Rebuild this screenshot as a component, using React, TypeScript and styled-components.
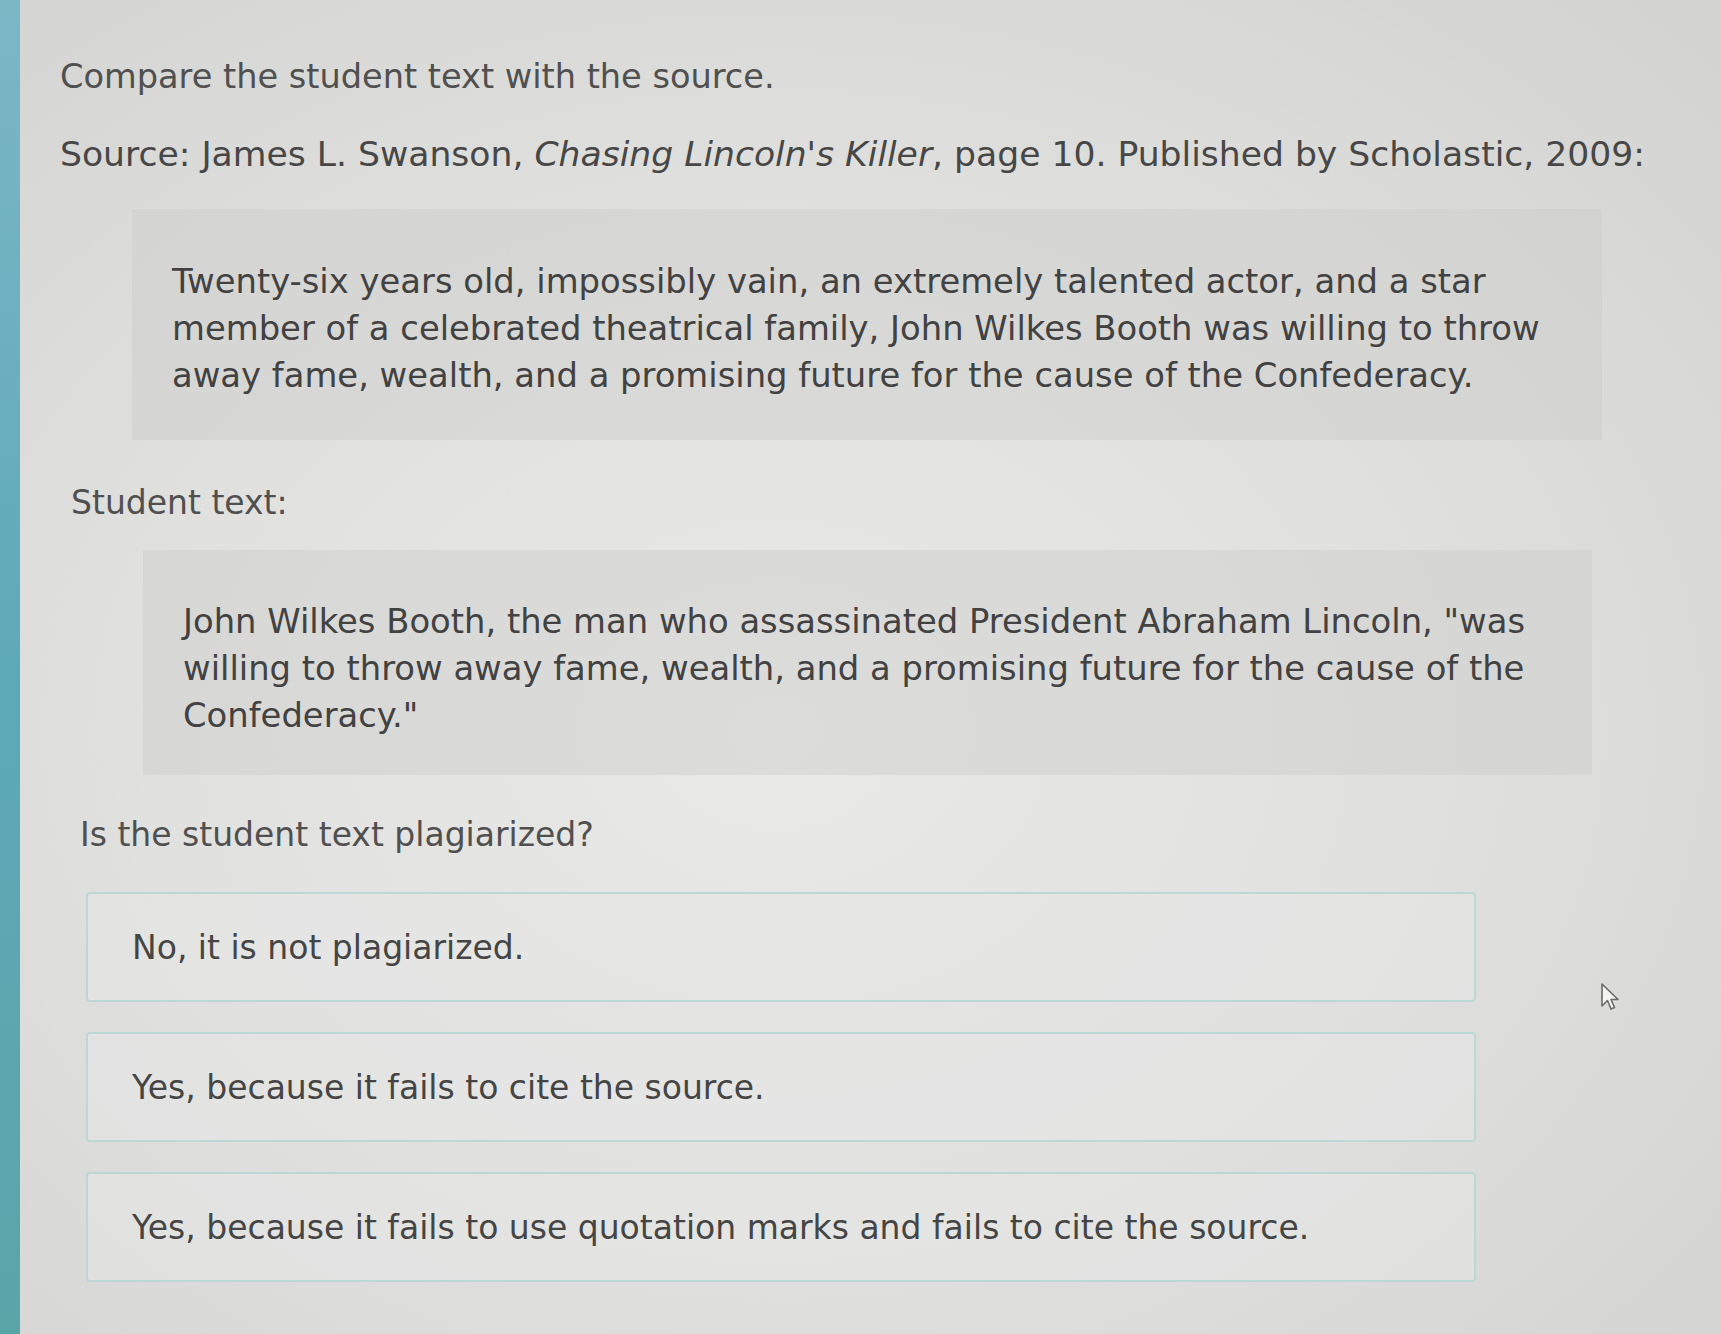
import styled, { createGlobalStyle } from 'styled-components';

const GlobalStyle = createGlobalStyle`
  html, body {
    margin: 0;
    padding: 0;
  }
  body {
    font-family: "DejaVu Sans", Verdana, sans-serif;
    background: #e0e0de;
  }
`;

const Page = styled.div`
  position: relative;
  width: 1721px;
  height: 1334px;
  display: flex;
  overflow: hidden;
  background: radial-gradient(ellipse at 45% 55%, #e9e9e7 0%, #e1e1df 45%, #d2d2d0 100%);
`;

const Stripe = styled.div`
  width: 20px;
  flex-shrink: 0;
  background: linear-gradient(180deg, #7cb7c6 0%, #5ea9b8 50%, #5aa5a8 100%);
`;

const Main = styled.main`
  flex: 1;
  display: flex;
  flex-direction: column;
  padding: 57px 0 0 40px;
  color: #484848;
`;

const Prompt = styled.p<{ indent?: number; top?: number; size?: number }>`
  margin: ${p => p.top ?? 0}px 0 0 ${p => p.indent ?? 0}px;
  font-size: ${p => p.size ?? 33}px;
  line-height: 40px;
  color: #505050;
`;

const Citation = styled.p`
  margin: 36px 0 0 0;
  font-size: 34.6px;
  line-height: 42px;
  color: #474747;
  em {
    font-style: italic;
  }
`;

const Quote = styled.blockquote<{ indent: number; top: number; width: number; pt: number; pb: number }>`
  margin: ${p => p.top}px 0 0 ${p => p.indent}px;
  width: ${p => p.width}px;
  box-sizing: border-box;
  padding: ${p => p.pt}px 30px ${p => p.pb}px 40px;
  background: rgba(205, 205, 203, 0.45);
  font-size: 33.8px;
  line-height: 47px;
  color: #424242;
`;

const Options = styled.div`
  display: flex;
  flex-direction: column;
  gap: 30px;
  margin: 37px 0 0 26px;
  width: 1390px;
`;

const Option = styled.button`
  all: unset;
  box-sizing: border-box;
  height: 110px;
  display: flex;
  align-items: center;
  padding: 0 44px;
  border: 2px solid #bcd8d6;
  border-radius: 4px;
  background: rgba(230, 232, 230, 0.6);
  font-family: "DejaVu Sans", Verdana, sans-serif;
  font-size: 33px;
  color: #454545;
  cursor: pointer;
`;

const Cursor = styled.svg`
  position: absolute;
  left: 1600px;
  top: 982px;
`;

export default function App() {
  return (
    <Page>
      <GlobalStyle />
      <Stripe />
      <Main>
        <Prompt size={33.6}>Compare the student text with the source.</Prompt>
        <Citation>
          Source: James L. Swanson, <em>Chasing Lincoln's Killer</em>, page 10. Published by Scholastic, 2009:
        </Citation>
        <Quote indent={72} top={34} width={1470} pt={49} pb={41}>
          Twenty-six years old, impossibly vain, an extremely talented actor, and a star<br />
          member of a celebrated theatrical family, John Wilkes Booth was willing to throw<br />
          away fame, wealth, and a promising future for the cause of the Confederacy.
        </Quote>
        <Prompt indent={11} top={43}>Student text:</Prompt>
        <Quote indent={83} top={27} width={1449} pt={48} pb={36}>
          John Wilkes Booth, the man who assassinated President Abraham Lincoln, "was<br />
          willing to throw away fame, wealth, and a promising future for the cause of the<br />
          Confederacy."
        </Quote>
        <Prompt indent={20} top={40}>Is the student text plagiarized?</Prompt>
        <Options>
          <Option>No, it is not plagiarized.</Option>
          <Option>Yes, because it fails to cite the source.</Option>
          <Option>Yes, because it fails to use quotation marks and fails to cite the source.</Option>
        </Options>
      </Main>
      <Cursor width="22" height="30" viewBox="0 0 22 30">
        <path d="M2 2 L2 24 L7.5 18.5 L11 27 L14.5 25.5 L11 17.5 L18 17.5 Z" fill="#f4f4f2" stroke="#6a6a6a" strokeWidth="1.6" strokeLinejoin="round" />
      </Cursor>
    </Page>
  );
}
